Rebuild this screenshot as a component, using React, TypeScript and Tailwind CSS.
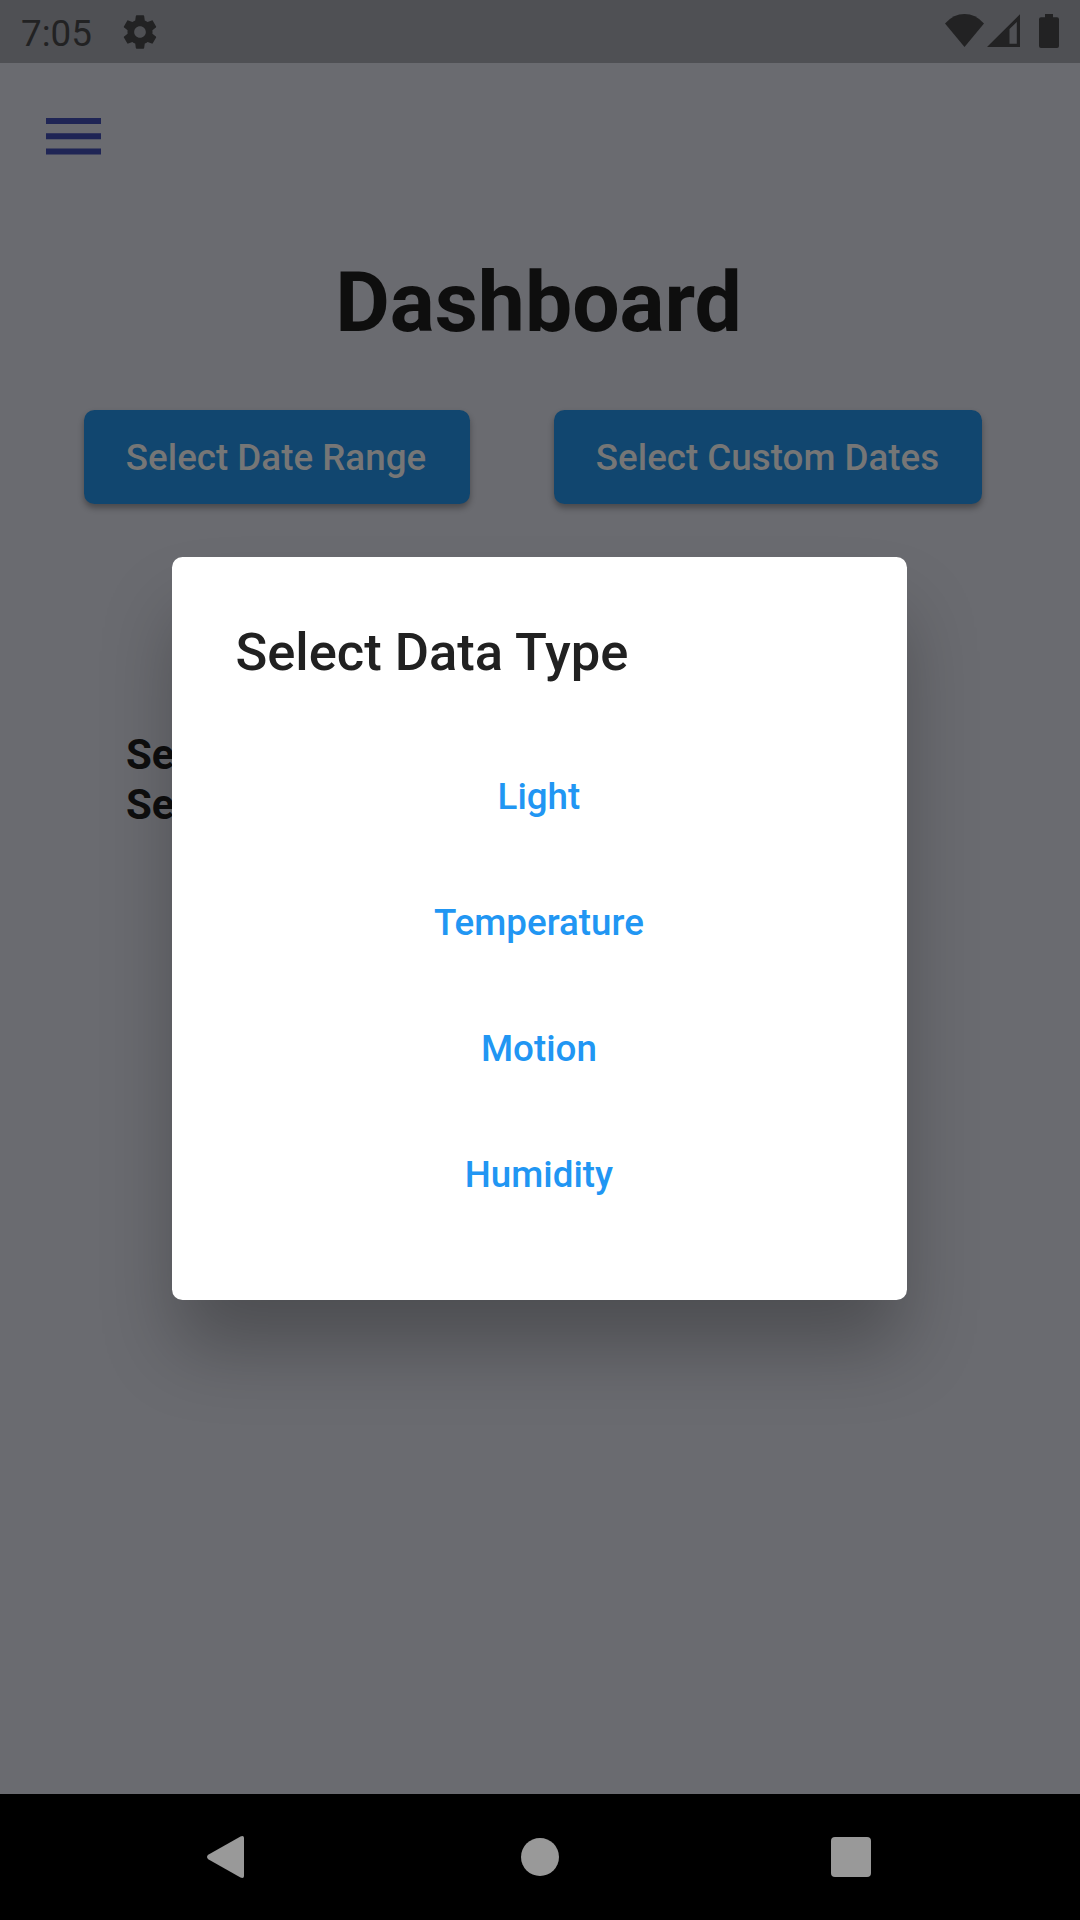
const dataTypes = ['Light', 'Temperature', 'Motion', 'Humidity'];

function StatusBar() {
  return (
    <header className="flex h-[63px] items-start justify-between bg-[#4f5054] text-[#222223]">
      <div className="flex items-start">
        <span className="ml-[21px] mt-[12px] w-[72px] whitespace-nowrap text-[36.75px] leading-[44px]">7:05</span>
        <svg className="ml-[27px] mt-[12px] size-[40px]" viewBox="0 0 24 24" fill="currentColor">
          <path d="M19.43 12.98c.04-.32.07-.64.07-.98s-.03-.66-.07-.98l2.11-1.65c.19-.15.24-.42.12-.64l-2-3.46c-.12-.22-.39-.3-.61-.22l-2.49 1c-.52-.4-1.08-.73-1.69-.98l-.38-2.65C14.46 2.18 14.25 2 14 2h-4c-.25 0-.46.18-.49.42l-.38 2.65c-.61.25-1.17.59-1.69.98l-2.49-1c-.23-.09-.49 0-.61.22l-2 3.46c-.13.22-.07.49.12.64l2.11 1.65c-.04.32-.07.65-.07.98s.03.66.07.98l-2.11 1.65c-.19.15-.24.42-.12.64l2 3.46c.12.22.39.3.61.22l2.49-1c.52.4 1.08.73 1.69.98l.38 2.65c.03.24.24.42.49.42h4c.25 0 .46-.18.49-.42l.38-2.65c.61-.25 1.17-.59 1.69-.98l2.49 1c.23.09.49 0 .61-.22l2-3.46c.12-.22.07-.49-.12-.64l-2.11-1.65zM12 15.5c-1.93 0-3.5-1.57-3.5-3.5s1.57-3.5 3.5-3.5 3.5 1.57 3.5 3.5-1.57 3.5-3.5 3.5z" />
        </svg>
      </div>
      <div className="mr-[21px] mt-[14px] flex items-start">
        <svg className="h-[33px] w-[39px]" viewBox="0 0 39 33" fill="currentColor">
          <path d="M0 9.4Q8.6 0 19.5 0T39 9.4L19.5 33Z" />
        </svg>
        <svg className="ml-[3px] h-[33px] w-[33px]" viewBox="0 0 33 33" fill="currentColor" fillRule="evenodd">
          <path d="M33 .3V33H0ZM29.8 8L22.5 15V29.8H29.8Z" />
        </svg>
        <svg className="ml-[19px] h-[34px] w-[20px]" viewBox="0 0 20 34" fill="currentColor">
          <path d="M6 0H14V3.3H18Q20 3.3 20 5.3V32Q20 34 18 34H2Q0 34 0 32V5.3Q0 3.3 2 3.3H6Z" />
        </svg>
      </div>
    </header>
  );
}

function ActionButton({ label, className }: { label: string; className: string }) {
  return (
    <button
      className={
        'h-[94.5px] rounded-[10.5px] bg-[#11466f] pt-[2px] text-center text-[36.75px] font-medium leading-[43px] whitespace-nowrap text-[#767676] shadow-[0_4px_6px_rgba(0,0,0,0.32)] ' +
        className
      }
    >
      {label}
    </button>
  );
}

function DataTypeDialog() {
  return (
    <div
      role="dialog"
      className="absolute left-[172.4px] top-[557px] flex h-[743px] w-[735px] flex-col rounded-[10.5px] bg-white shadow-[0_52px_76px_-6px_rgba(0,0,0,0.28)]"
    >
      <h2 className="ml-[63px] mt-[64px] text-[52.5px] font-medium leading-[63px] text-[#212121]">Select Data Type</h2>
      <div className="mt-[49px] flex flex-col pr-[2px]">
        {dataTypes.map((type) => (
          <button key={type} className="h-[126px] text-[36.75px] font-medium leading-[43px] text-[#2196f3]">
            {type}
          </button>
        ))}
      </div>
    </div>
  );
}

function NavigationBar() {
  return (
    <nav className="flex h-[126px] items-center bg-black pl-[206px] text-[#999]">
      <svg className="h-[44px] w-[38px]" viewBox="0 0 38 44" fill="currentColor">
        <path d="M34.5 1.4Q38 0 38 3V41Q38 44 34.5 42.6L2.2 24.2Q-.2 22 2.2 19.8Z" />
      </svg>
      <div className="ml-[277px] size-[38px] rounded-full bg-[#999]" />
      <div className="ml-[272px] size-[40px] rounded-[4px] bg-[#999]" />
    </nav>
  );
}

export default function App() {
  return (
    <div className="relative flex h-[1920px] w-[1080px] flex-col overflow-hidden bg-[#6a6b70] font-[Roboto,sans-serif]">
      <StatusBar />
      <main className="flex flex-1 flex-col">
        <svg className="ml-[46px] mt-[55px] h-[37px] w-[55px]" viewBox="0 0 55 37" fill="#1f2555">
          <path d="M0 0H55V6H0ZM0 15.2H55V21.3H0ZM0 30.4H55V36.5H0Z" />
        </svg>
        <h1 className="mt-[99px] pr-[3px] text-center text-[84px] font-bold leading-[98px] text-[#0e0e0e]">Dashboard</h1>
        <div className="mt-[57.5px] flex gap-[84px] pl-[84px]">
          <ActionButton label="Select Date Range" className="w-[386px] pr-[2px]" />
          <ActionButton label="Select Custom Dates" className="w-[428px] pr-[1px]" />
        </div>
        <div className="ml-[126px] mt-[226px] text-[42px] font-bold leading-[50px] text-[#0e0e0e]">
          <p>Se</p>
          <p>Se</p>
        </div>
      </main>
      <NavigationBar />
      <DataTypeDialog />
    </div>
  );
}
